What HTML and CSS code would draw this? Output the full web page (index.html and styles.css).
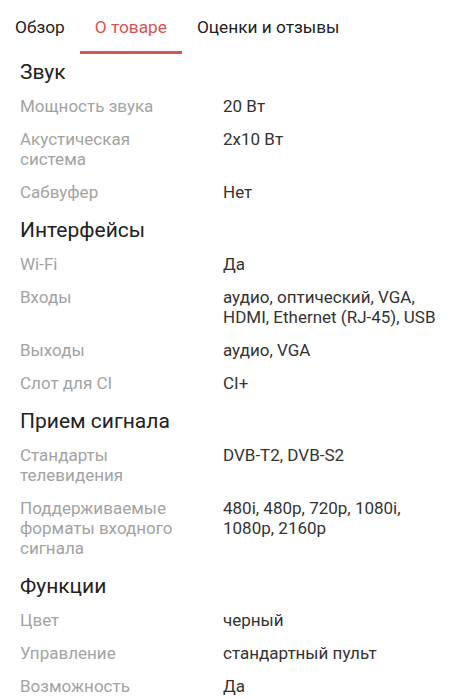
FILE: index.html
```html
<!DOCTYPE html>
<html lang="ru">
<head>
<meta charset="utf-8">
<link rel="stylesheet" href="styles.css">
</head>
<body>
<nav class="tabs">
  <div class="tab">Обзор</div>
  <div class="tab active">О товаре</div>
  <div class="tab">Оценки и отзывы</div>
</nav>
<main class="specs">
  <h2 class="group first">Звук</h2>
  <div class="row"><div class="label">Мощность звука</div><div class="value">20 Вт</div></div>
  <div class="row"><div class="label">Акустическая система</div><div class="value">2x10 Вт</div></div>
  <div class="row"><div class="label">Сабвуфер</div><div class="value">Нет</div></div>

  <h2 class="group">Интерфейсы</h2>
  <div class="row"><div class="label">Wi-Fi</div><div class="value">Да</div></div>
  <div class="row"><div class="label">Входы</div><div class="value">аудио, оптический, VGA, HDMI, Ethernet (RJ-45), USB</div></div>
  <div class="row"><div class="label">Выходы</div><div class="value">аудио, VGA</div></div>
  <div class="row"><div class="label">Слот для CI</div><div class="value">CI+</div></div>

  <h2 class="group">Прием сигнала</h2>
  <div class="row"><div class="label">Стандарты телевидения</div><div class="value">DVB-T2, DVB-S2</div></div>
  <div class="row"><div class="label">Поддерживаемые форматы входного сигнала</div><div class="value">480i, 480p, 720p, 1080i, 1080p, 2160p</div></div>

  <h2 class="group">Функции</h2>
  <div class="row"><div class="label">Цвет</div><div class="value">черный</div></div>
  <div class="row"><div class="label">Управление</div><div class="value">стандартный пульт</div></div>
  <div class="row"><div class="label">Возможность</div><div class="value">Да</div></div>
</main>
</body>
</html>
```
FILE: styles.css
```css
html, body {
  margin: 0;
  padding: 0;
  background: #ffffff;
  font-family: Roboto, "Noto Sans", sans-serif;
  overflow: hidden;
}
.tabs {
  display: flex;
  height: 54px;
}
.tab {
  font-size: 17.3px;
  line-height: 20px;
  color: #222222;
  padding: 17px 15px 0 15px;
  box-sizing: border-box;
  height: 54px;
}
.tab.active {
  color: #d9534f;
  border-bottom: 3px solid #d9534f;
}
.specs {
  padding: 0 20px;
}
.group {
  margin: 9px 0 4px 0;
  font-size: 21px;
  line-height: 26px;
  font-weight: 400;
  color: #222222;
}
.group.first {
  margin-top: 5px;
}
.row {
  display: grid;
  grid-template-columns: 203px 1fr;
  padding: 7px 0 6px 0;
  font-size: 17px;
  line-height: 20px;
}
.label {
  color: #a3a3a3;
  padding-right: 30px;
}
.value {
  color: #333333;
}
```
